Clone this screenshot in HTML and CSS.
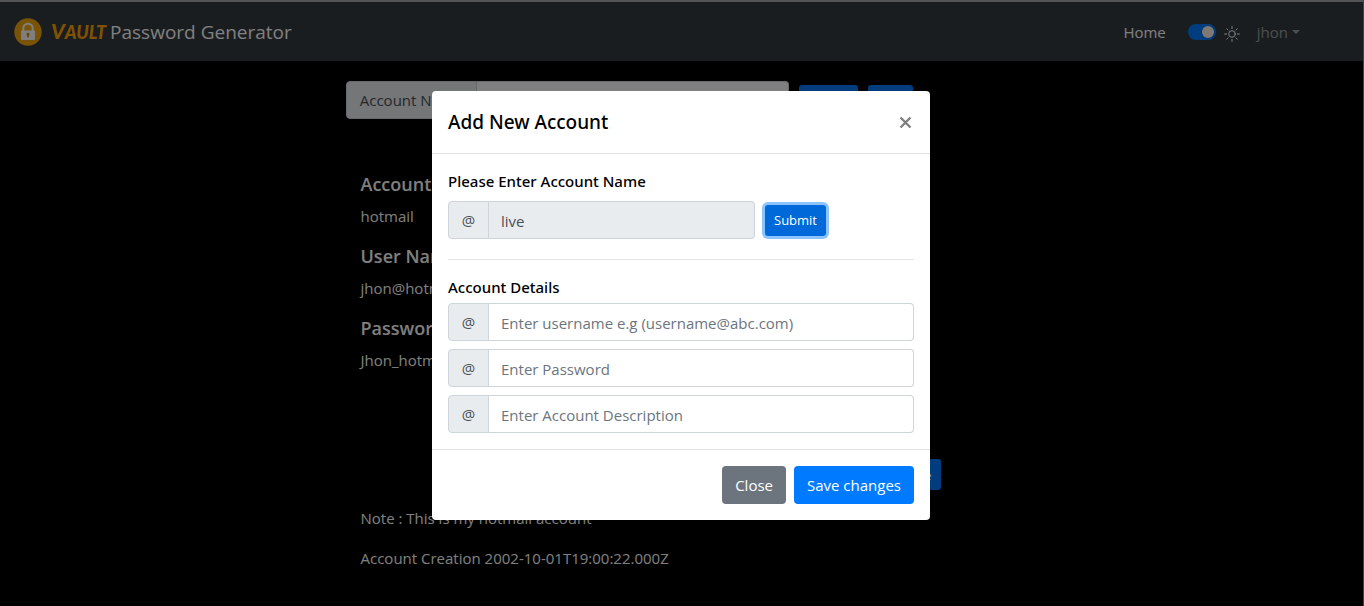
FILE: index.html
```html
<!DOCTYPE html>
<html lang="en">
<head>
<meta charset="utf-8">
<meta name="viewport" content="width=device-width, initial-scale=1">
<title>Vault Password Generator</title>
<link rel="stylesheet" href="styles.css">
</head>
<body>
<header class="navbar">
  <a class="brand" href="#">
    <svg class="brand-icon" viewBox="0 0 28 28" aria-hidden="true">
      <circle cx="14" cy="14" r="13.7" fill="#f5a80c"/>
      <path d="M9.3 13V10.4a4.7 4.7 0 0 1 9.4 0V13" fill="none" stroke="#fff" stroke-width="2"/>
      <rect x="7" y="12.4" width="14" height="9.6" rx="1" fill="#fff"/>
      <path d="M14 14.8a1.5 1.5 0 0 1 .8 2.8l.3 1.6h-2.2l.3-1.6a1.5 1.5 0 0 1 .8-2.8z" fill="#d08c10"/>
    </svg>
    <span class="brand-mark">V<small>AULT</small></span>
    <span>Password Generator</span>
  </a>
  <nav class="nav">
    <a class="nav-link" href="#">Home</a>
    <div class="theme">
      <input class="switch" type="checkbox" role="switch" id="theme" checked>
      <label for="theme" aria-label="Light mode">
        <svg class="sun" viewBox="0 0 16 16" fill="none" stroke="#fff" stroke-width="1" stroke-linecap="round">
          <circle cx="8" cy="8" r="3.3"/>
          <path d="M8 .6v2M8 13.4v2M.6 8h2M13.4 8h2M2.8 2.8l1.3 1.3M11.9 11.9l1.3 1.3M2.8 13.2l1.3-1.3M11.9 4.1l1.3-1.3"/>
        </svg>
      </label>
    </div>
    <button class="user" type="button">jhon<span class="caret"></span></button>
  </nav>
</header>

<main class="page">
  <form class="search">
    <div class="input-group search-group">
      <label class="addon search-label" for="search">Account Name</label>
      <input class="control" id="search" type="text">
    </div>
    <button class="btn btn-primary btn-sm" type="button">Search</button>
    <button class="btn btn-primary btn-sm" type="button">New</button>
  </form>
  <section class="account">
    <h2>Account Name</h2>
    <p>hotmail</p>
    <h2>User Name</h2>
    <p>jhon@hotmail.com</p>
    <h2>Password</h2>
    <p>Jhon_hotmail</p>
    <div class="account-actions">
      <button class="btn btn-primary btn-sm" type="button">Delete</button>
    </div>
    <p>Note : This is my hotmail account</p>
    <p>Account Creation 2002-10-01T19:00:22.000Z</p>
  </section>
</main>

<div class="backdrop">
  <div class="modal" role="dialog" aria-modal="true" aria-labelledby="modal-title">
    <div class="modal-header">
      <h1 id="modal-title">Add New Account</h1>
      <button class="close" type="button" aria-label="Close dialog">
        <svg viewBox="0 0 12 12" aria-hidden="true"><path d="M1.4 1.4l9.2 9.2M10.6 1.4l-9.2 9.2" stroke="#7f7f7f" stroke-width="2.2"/></svg>
      </button>
    </div>
    <div class="modal-body">
      <label class="field-title" for="account">Please Enter Account Name</label>
      <div class="name-row">
        <div class="input-group name-group">
          <span class="addon">@</span>
          <input class="control" id="account" type="text" value="live" disabled>
        </div>
        <button class="btn btn-primary btn-sm focused" type="button">Submit</button>
      </div>
      <hr>
      <h2 class="details-title">Account Details</h2>
      <div class="details">
        <div class="input-group">
          <span class="addon">@</span>
          <input class="control" type="text" aria-label="Username" placeholder="Enter username e.g (username@abc.com)">
        </div>
        <div class="input-group">
          <span class="addon">@</span>
          <input class="control" type="password" aria-label="Password" placeholder="Enter Password">
        </div>
        <div class="input-group">
          <span class="addon">@</span>
          <input class="control" type="text" aria-label="Account description" placeholder="Enter Account Description">
        </div>
      </div>
    </div>
    <div class="modal-footer">
      <button class="btn btn-secondary" type="button">Close</button>
      <button class="btn btn-primary" type="button">Save changes</button>
    </div>
  </div>
</div>
</body>
</html>
```
FILE: styles.css
```css
* { box-sizing: border-box; }

body {
  margin: 0;
  min-height: 100vh;
  background: #000;
  color: #fff;
  font: 15px/24px "Open Sans", "Noto Sans", sans-serif;
  border-right: 1px solid #5f8bc4;
  overflow: hidden;
}

h1, h2, p { margin: 0; }
button, input { font: inherit; }
a { color: inherit; text-decoration: none; }

.navbar {
  display: flex;
  justify-content: space-between;
  align-items: center;
  height: 61px;
  padding: 0 63px 0 14px;
  border-top: 2px solid #a4a8ac;
  background: #343a40;
}
.brand { display: flex; align-items: center; font-size: 19px; }
.brand-icon { width: 28px; height: 28px; margin-right: 9px; }
.brand-mark {
  margin-right: 4px;
  color: #ffa500;
  font: italic 900 21px/24px Lato, sans-serif;
}
.brand-mark small { font-size: 18px; }

.nav { display: flex; align-items: center; }
.nav-link { margin-right: 22px; }
.theme { display: flex; align-items: center; gap: 8px; margin-right: 17px; }
.theme label { display: flex; }
.switch {
  appearance: none;
  display: flex;
  width: 28px;
  height: 16px;
  margin: 0;
  padding: 2px;
  border-radius: 8px;
  background: #007bff;
}
.switch::before {
  content: "";
  width: 12px;
  height: 12px;
  margin-left: 12px;
  border-radius: 50%;
  background: #fff2e2;
}
.sun { width: 16px; height: 16px; margin-top: 4px; }
.user {
  display: flex;
  align-items: center;
  gap: 4px;
  padding: 0;
  border: 0;
  background: none;
  color: rgba(255, 255, 255, .5);
}
.caret {
  border: 4px solid transparent;
  border-top-color: currentColor;
  border-bottom: 0;
}

.page { max-width: 672px; margin: 20px auto 0; padding-right: 2px; }
.search { display: flex; align-items: center; gap: 10px; }
.search-group { width: 443px; }
.addon.search-label { width: 131px; }

.account { padding: 53px 15px 0; }
.account h2 { margin-bottom: 8px; font-size: 18px; font-weight: 600; line-height: 24px; }
.account p { margin-bottom: 16px; }
.account-actions {
  display: flex;
  justify-content: flex-end;
  padding: 71px 60px 16px 0;
}

.input-group { display: flex; height: 38px; }
.addon {
  display: flex;
  align-items: center;
  justify-content: center;
  width: 41px;
  border: 1px solid #ced4da;
  border-radius: 4px 0 0 4px;
  background: #e9ecef;
  color: #495057;
}
.control {
  flex: 1;
  min-width: 0;
  padding: 2px 12px 0;
  border: 1px solid #ced4da;
  border-left: 0;
  border-radius: 0 4px 4px 0;
  background: #fff;
  color: #495057;
}
.control::placeholder { color: #6c757d; }
.control:disabled { background: #e9ecef; }

.btn {
  height: 38px;
  padding: 0 12px;
  border: 1px solid transparent;
  border-radius: 4px;
  color: #fff;
}
.btn-sm { height: 31px; padding: 0 8px; border-radius: 3px; font-size: 13px; }
.btn-primary { background: #007bff; }
.btn-secondary { background: #6c757d; }
.focused { background: #0069d9; box-shadow: 0 0 0 3px rgba(0, 123, 255, .45); }

.backdrop {
  position: fixed;
  inset: 0;
  padding: 91px 2px 0 0;
  background: rgba(0, 0, 0, .5);
}
.modal {
  max-width: 498px;
  margin: 0 auto;
  border-radius: 4px;
  background: #fff;
  color: #000;
}
.modal-header {
  display: flex;
  align-items: center;
  justify-content: space-between;
  height: 63px;
  padding: 0 18px 0 16px;
  border-bottom: 1px solid #dee2e6;
}
.modal-header h1 { font-family: "Noto Sans", sans-serif; font-size: 19px; font-weight: 500; line-height: 30px; }
.close { display: flex; padding: 0; border: 0; background: none; }
.close svg { width: 13px; height: 13px; }
.modal-body { padding: 15px 16px 16px; }
.field-title { display: block; margin-bottom: 8px; font-family: "Noto Sans", sans-serif; font-weight: 500; }
.name-row { display: flex; align-items: center; gap: 10px; }
.name-group { width: 307px; }
hr { margin: 20px 0 15px; border: 0; border-top: 1px solid #e3e4e5; }
.details-title { margin-bottom: 4px; font-family: "Noto Sans", sans-serif; font-size: 15px; font-weight: 500; line-height: 24px; }
.details { display: grid; gap: 8px; }
.modal-footer {
  display: flex;
  justify-content: flex-end;
  gap: 8px;
  padding: 16px;
  border-top: 1px solid #dee2e6;
}
```
